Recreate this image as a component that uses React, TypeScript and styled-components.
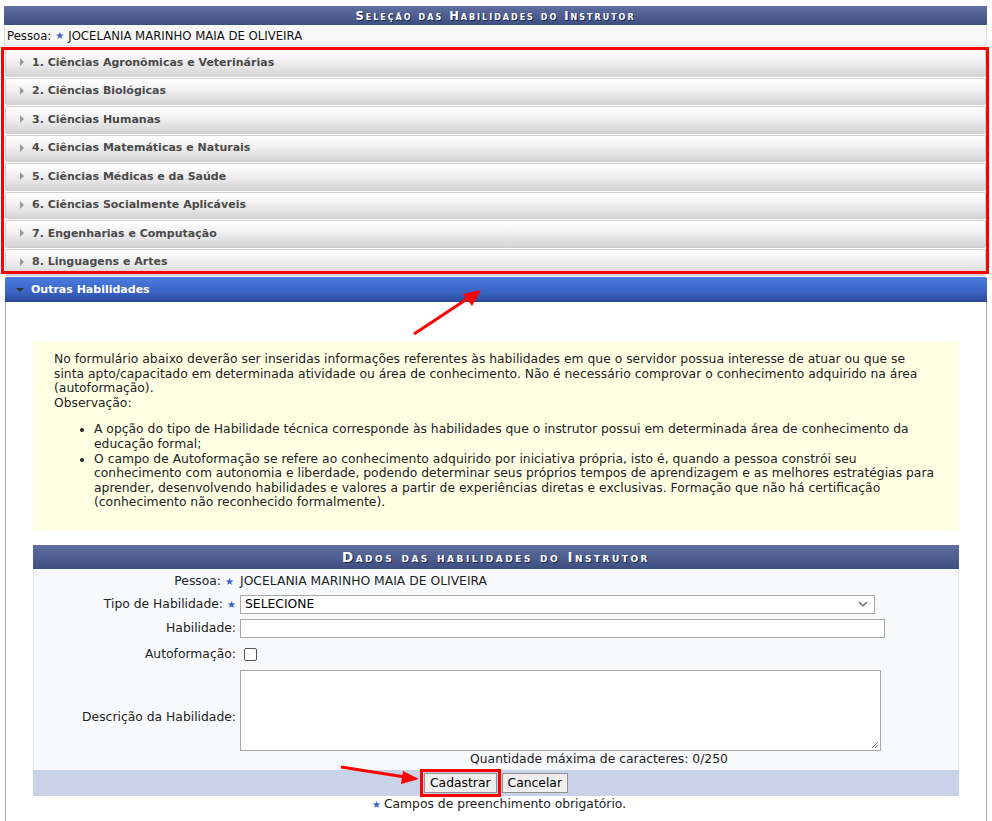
import React from "react";
import styled, { createGlobalStyle } from "styled-components";

const Global = createGlobalStyle`
  html, body { margin: 0; padding: 0; background: #fff; }
  body { font-family: "DejaVu Sans", Verdana, sans-serif; font-size: 12.35px; color: #222; }
  * { box-sizing: border-box; }
`;

const Page = styled.div`
  position: relative;
  width: 992px;
  height: 821px;
  overflow: hidden;
  padding: 6px 5px 0 4px;
`;

const Caption = styled.div<{ $size?: number; $h?: number; $ls?: number }>`
  height: ${(p) => p.$h ?? 19}px;
  display: flex;
  align-items: center;
  justify-content: center;
  background: linear-gradient(#5f6fa0, #3f4e80);
  color: #fff;
  font-weight: bold;
  font-variant: small-caps;
  letter-spacing: ${(p) => p.$ls ?? 2}px;
  font-size: ${(p) => p.$size ?? 11.5}px;
  text-shadow: 1px 1px 0 #1d2850;
`;

const PersonRow = styled.div`
  height: 20px;
  margin-top: 1px;
  display: flex;
  align-items: center;
  padding-left: 2px;
  background: #f8f8f8;
  border: 1px solid #ddd;
  border-top: none;
  font-size: 11.7px;
  color: #111;
`;

const Star = styled.span`
  color: #3a5fcd;
  font-size: 10px;
  margin: 0 4px;
`;

const AccList = styled.div`
  position: relative;
  margin: 3px 1px 0 1px;
  display: flex;
  flex-direction: column;
  gap: 1px;
  &::after {
    content: "";
    position: absolute;
    top: -2px;
    left: -4px;
    right: -3px;
    bottom: 2px;
    border: 3px solid #f00;
    pointer-events: none;
  }
`;

const AccHeader = styled.div`
  height: 27.5px;
  display: flex;
  align-items: center;
  padding: 0 0 1px 14px;
  background: linear-gradient(#ffffff 0%, #f2f2f2 40%, #d4d4d6 100%);
  border: 1px solid #cfcfcf;
  border-radius: 2px;
  color: #4a4a4a;
  font-weight: bold;
  font-size: 11px;
`;

const Tri = styled.span<{ $open?: boolean }>`
  display: inline-block;
  width: 0;
  height: 0;
  margin-right: 8px;
  ${(p) =>
    p.$open
      ? `border-left: 4px solid transparent; border-right: 4px solid transparent; border-top: 4px solid #333; margin-left:-2px; margin-right: 7px;`
      : `border-top: 4px solid transparent; border-bottom: 4px solid transparent; border-left: 4px solid #999;`}
`;

const OpenHeader = styled.div`
  margin: 1px 0 0 1px;
  height: 25px;
  display: flex;
  align-items: center;
  padding-left: 13px;
  background: linear-gradient(#4b7ce0, #3a63c4 60%, #2a4897);
  color: #fff;
  font-weight: bold;
  font-size: 11px;
  border-radius: 2px 2px 0 0;
`;

const Panel = styled.div`
  margin-left: 1px;
  border-left: 1px solid #aaa;
  border-right: 1px solid #aaa;
  background: #fff;
  padding: 39px 27px 40px 27px;
  height: 560px;
`;

const Note = styled.div`
  background: #ffffe4;
  padding: 11px 22px 20px 21px;
  line-height: 14.6px;
  color: #222;
  height: 190px;
`;

const NoteList = styled.ul`
  margin: 12px 0 0 0;
  padding-left: 40px;
`;

const FormBox = styled.div`
  margin-top: 14px;
`;

const FormBody = styled.div`
  background: #f8f9fb;
  border-left: 1px solid #e4e6ec;
  border-right: 1px solid #e4e6ec;
  padding-top: 1px;
  display: grid;
  grid-template-columns: 202px 1fr;
  column-gap: 4px;
  align-items: center;
`;

const Label = styled.div<{ $shift?: number }>`
  text-align: right;
  white-space: nowrap;
  padding-top: ${(p) => p.$shift ?? 0}px;
`;

const Field = styled.div<{ $h: number }>`
  height: ${(p) => p.$h}px;
  display: flex;
  align-items: center;
`;

const Select = styled.div`
  width: 635px;
  height: 19px;
  border: 1px solid #a7a7a7;
  background: #fff;
  display: flex;
  align-items: center;
  justify-content: space-between;
  padding: 0 6px 0 4px;
  color: #000;
`;

const TextInput = styled.div`
  width: 645px;
  height: 19px;
  border: 1px solid #a7a7a7;
  background: #fff;
`;

const Check = styled.div`
  width: 13px;
  height: 13px;
  border: 1px solid #555;
  border-radius: 2px;
  background: #fff;
  margin-left: 4px;
`;

const TextArea = styled.div`
  position: relative;
  width: 641px;
  height: 81px;
  border: 1px solid #a7a7a7;
  background: #fff;
`;

const Grip = styled.svg`
  position: absolute;
  right: 1px;
  bottom: 1px;
`;

const Counter = styled.div`
  grid-column: 2;
  text-align: center;
  height: 18px;
  line-height: 14px;
`;

const FormFooter = styled.div`
  height: 26px;
  background: #c8d3ea;
  display: flex;
  justify-content: center;
  align-items: center;
  gap: 5px;
`;

const Btn = styled.button<{ $mark?: boolean }>`
  font-family: "DejaVu Sans", Verdana, sans-serif;
  font-size: 12.35px;
  color: #000;
  background: #efefef;
  border: 1px solid #8f8f8f;
  border-radius: 0;
  height: 20px;
  padding: 0 5px;
  ${(p) => (p.$mark ? "outline: 3px solid #f00; outline-offset: 1px;" : "")}
`;

const Required = styled.div`
  text-align: center;
  margin-top: 1px;
  padding-left: 6px;
`;

const Arrow = styled.svg`
  position: absolute;
  left: 0;
  top: 0;
  pointer-events: none;
`;

const areas = [
  "1. Ciências Agronômicas e Veterinárias",
  "2. Ciências Biológicas",
  "3. Ciências Humanas",
  "4. Ciências Matemáticas e Naturais",
  "5. Ciências Médicas e da Saúde",
  "6. Ciências Socialmente Aplicáveis",
  "7. Engenharias e Computação",
  "8. Linguagens e Artes",
];

export default function App() {
  return (
    <>
      <Global />
      <Page>
        <Caption>Seleção das Habilidades do Instrutor</Caption>
        <PersonRow>
          Pessoa:<Star>★</Star>JOCELANIA MARINHO MAIA DE OLIVEIRA
        </PersonRow>
        <AccList>
          {areas.map((a) => (
            <AccHeader key={a}>
              <Tri />
              {a}
            </AccHeader>
          ))}
        </AccList>
        <OpenHeader>
          <Tri $open />
          Outras Habilidades
        </OpenHeader>
        <Panel>
          <Note>
            No formulário abaixo deverão ser inseridas informações referentes às habilidades em que o servidor possua interesse de atuar ou que se sinta apto/capacitado em determinada atividade ou área de conhecimento. Não é necessário comprovar o conhecimento adquirido na área (autoformação).
            <br />
            Observação:
            <NoteList>
              <li>
                A opção do tipo de Habilidade técnica corresponde às habilidades que o instrutor possui em determinada área de conhecimento da educação formal;
              </li>
              <li>
                O campo de Autoformação se refere ao conhecimento adquirido por iniciativa própria, isto é, quando a pessoa constrói seu conhecimento com autonomia e liberdade, podendo determinar seus próprios tempos de aprendizagem e as melhores estratégias para aprender, desenvolvendo habilidades e valores a partir de experiências diretas e exclusivas. Formação que não há certificação (conhecimento não reconhecido formalmente).
              </li>
            </NoteList>
          </Note>
          <FormBox>
            <Caption $size={13.5} $h={24} $ls={2.5}>
              Dados das habilidades do Instrutor
            </Caption>
            <FormBody>
              <Label>
                Pessoa:<Star style={{ marginRight: 2 }}>★</Star>
              </Label>
              <Field $h={22}>JOCELANIA MARINHO MAIA DE OLIVEIRA</Field>
              <Label>
                Tipo de Habilidade:<Star style={{ marginRight: 0 }}>★</Star>
              </Label>
              <Field $h={24}>
                <Select>
                  SELECIONE
                  <svg width="10" height="6" viewBox="0 0 10 6">
                    <path d="M1 1 L5 5 L9 1" fill="none" stroke="#555" strokeWidth="1.2" />
                  </svg>
                </Select>
              </Field>
              <Label>Habilidade:</Label>
              <Field $h={24}>
                <TextInput />
              </Field>
              <Label>Autoformação:</Label>
              <Field $h={28}>
                <Check />
              </Field>
              <Label $shift={14}>Descrição da Habilidade:</Label>
              <Field $h={84}>
                <TextArea>
                  <Grip width="9" height="9" viewBox="0 0 9 9">
                    <path d="M8 2 L2 8 M8 5 L5 8" stroke="#777" strokeWidth="1" />
                  </Grip>
                </TextArea>
              </Field>
              <Counter>Quantidade máxima de caracteres: 0/250</Counter>
            </FormBody>
            <FormFooter>
              <Btn $mark>Cadastrar</Btn>
              <Btn>Cancelar</Btn>
            </FormFooter>
          </FormBox>
          <Required>
            <Star style={{ margin: "0 3px 0 0" }}>★</Star>Campos de preenchimento obrigatório.
          </Required>
        </Panel>
        <Arrow width="992" height="821">
          <line x1="414" y1="334" x2="470" y2="297" stroke="#f00" strokeWidth="3" />
          <polygon points="481,290 463,294 472,306" fill="#f00" />
          <line x1="341" y1="767" x2="405" y2="777" stroke="#f00" strokeWidth="3" />
          <polygon points="419,779 403,771 401,784" fill="#f00" />
        </Arrow>
      </Page>
    </>
  );
}
